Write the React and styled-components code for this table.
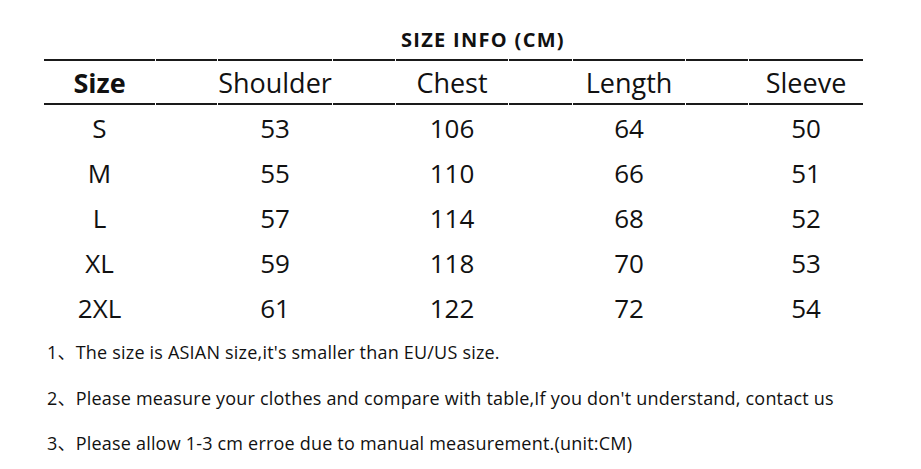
import React from "react";
import styled, { createGlobalStyle } from "styled-components";

const Global = createGlobalStyle`
  html, body { margin: 0; padding: 0; background: #fff; }
  body { font-family: "Open Sans", "Noto Sans CJK SC", sans-serif; color: #111; }
`;

const Page = styled.div`
  width: 921px;
  height: 469px;
  box-sizing: border-box;
  padding: 24px 0 0 44px;
  overflow: hidden;
`;

const Title = styled.h1`
  margin: 0;
  padding-left: 357px;
  font-size: 20px;
  line-height: 32px;
  height: 35px;
  font-weight: 700;
  letter-spacing: 1.3px;
  color: #111;
`;

const Grid = styled.div`
  display: grid;
  grid-template-columns: 111px 61px 114px 62px 112px 63px 112px 62px 114px;
  column-gap: 1px;
  width: 819px;
`;

const Head = styled.div`
  grid-column: ${(p) => p.$col};
  border-top: 2px solid #1a1a1a;
  border-bottom: 2px solid #1a1a1a;
  height: 41px;
  display: flex;
  align-items: center;
  justify-content: center;
  font-size: 27px;
  font-weight: ${(p) => (p.$bold ? 700 : 400)};
  line-height: 1;
  padding-top: 1px;
  box-sizing: content-box;
  white-space: nowrap;
`;

const Cell = styled.div`
  grid-column: ${(p) => p.$col};
  height: 45px;
  display: flex;
  align-items: center;
  justify-content: center;
  font-size: 26px;
  line-height: 1;
`;

const Notes = styled.ol`
  list-style: none;
  margin: 9px 0 0;
  padding: 0 0 0 3px;
  display: flex;
  flex-direction: column;
  gap: 19.5px;
`;

const Note = styled.li`
  font-size: 18px;
  line-height: 26px;
  letter-spacing: 0.2px;
  color: #111;
  white-space: nowrap;
`;

const headers = ["Size", "Shoulder", "Chest", "Length", "Sleeve"];
const rows = [
  ["S", 53, 106, 64, 50],
  ["M", 55, 110, 66, 51],
  ["L", 57, 114, 68, 52],
  ["XL", 59, 118, 70, 53],
  ["2XL", 61, 122, 72, 54],
];
const notes = [
  "1、The size is ASIAN size,it's smaller than EU/US size.",
  "2、Please measure your clothes and compare with table,If you don't understand, contact us",
  "3、Please allow 1-3 cm erroe due to manual measurement.(unit:CM)",
];

export default function App() {
  const cols = [1, 2, 3, 4, 5, 6, 7, 8, 9];
  return (
    <Page>
      <Global />
      <Title>SIZE INFO (CM)</Title>
      <Grid>
        {cols.map((c) => (
          <Head key={c} $col={c} $bold={c === 1}>
            {c % 2 === 1 ? headers[(c - 1) / 2] : null}
          </Head>
        ))}
        {rows.map((r) =>
          r.map((v, i) => (
            <Cell key={r[0] + i} $col={i * 2 + 1}>
              {v}
            </Cell>
          ))
        )}
      </Grid>
      <Notes>
        {notes.map((n) => (
          <Note key={n}>{n}</Note>
        ))}
      </Notes>
    </Page>
  );
}
